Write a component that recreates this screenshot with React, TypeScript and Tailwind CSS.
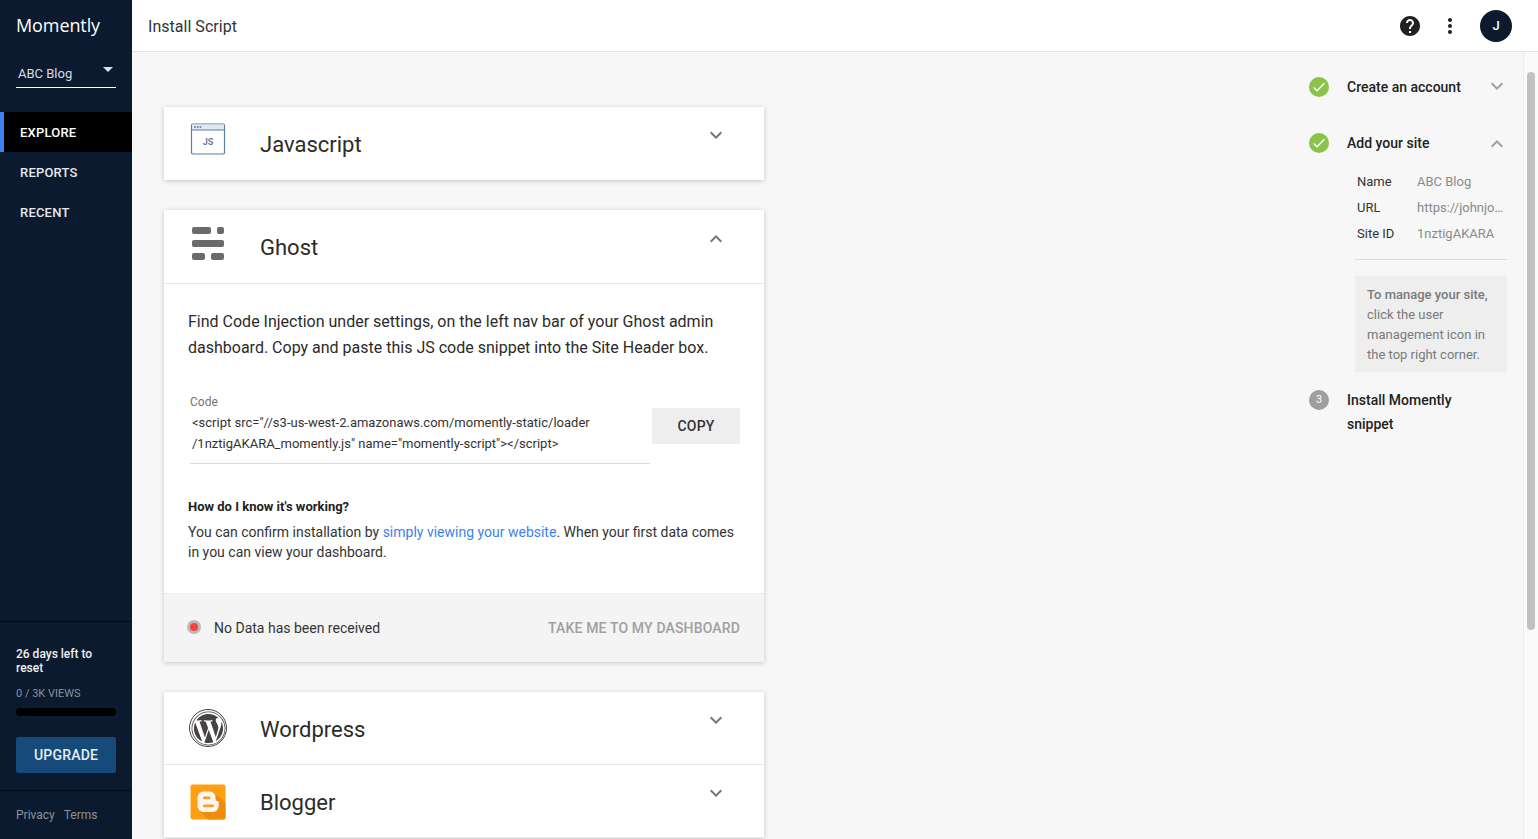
import { MdHelp, MdMoreVert, MdKeyboardArrowDown, MdKeyboardArrowUp, MdCheck } from "react-icons/md";
import { FaWordpress } from "react-icons/fa";

const JsIcon = () => (
  <svg width="36" height="34" viewBox="0 0 36 34" fill="none">
    <rect x="1.5" y="1" width="33" height="30" rx="1.5" fill="#fff" stroke="#5b7f9e" strokeWidth="1.2" />
    <rect x="2.1" y="1.6" width="31.8" height="5.4" fill="#e3e8ee" />
    <line x1="1.5" y1="7" x2="34.5" y2="7" stroke="#5b7f9e" strokeWidth="1" />
    <circle cx="5" cy="4" r="0.9" fill="#5b7f9e" />
    <circle cx="7.7" cy="4" r="0.9" fill="#5b7f9e" />
    <circle cx="10.4" cy="4" r="0.9" fill="#5b7f9e" />
    <text x="18" y="21.5" textAnchor="middle" fontSize="9" fontWeight="700" fill="#5b7f9e" fontFamily="Roboto, sans-serif">
      JS
    </text>
  </svg>
);

const GhostIcon = () => (
  <svg width="34" height="34" viewBox="0 0 34 34" fill="#6b6b6b">
    <rect x="1" y="1" width="19" height="7" rx="2" />
    <rect x="26" y="1" width="7" height="7" rx="2" />
    <rect x="1" y="14" width="32" height="7" rx="2" />
    <rect x="1" y="27" width="13" height="7" rx="2" />
    <rect x="20" y="27" width="13" height="7" rx="2" />
  </svg>
);

const BloggerIcon = () => (
  <svg width="36" height="36" viewBox="0 0 36 36">
    <rect x="0.5" y="0.5" width="35" height="35" rx="2" fill="#ff9f12" />
    <path d="M9 26 L18 35.5 H33.5 a2 2 0 0 0 2 -2 V19 L27 11 Z" fill="#f08c0a" />
    <path
      d="M13.5 7.5 h6 a6 6 0 0 1 6 6 v1.5 a2 2 0 0 0 2 2 a1.2 1.2 0 0 1 1.2 1.2 v3.8 a6 6 0 0 1 -6 6 h-9.2 a6 6 0 0 1 -6 -6 v-8.5 a6 6 0 0 1 6 -6 Z"
      fill="#fbf6ee"
    />
    <rect x="13" y="12.6" width="7.5" height="2.6" rx="1.3" fill="#f0a030" />
    <rect x="13" y="20.6" width="11" height="2.6" rx="1.3" fill="#f0a030" />
  </svg>
);

const Chevron = ({ open }: { open?: boolean }) =>
  open ? (
    <MdKeyboardArrowUp className="size-6 text-[#757575]" />
  ) : (
    <MdKeyboardArrowDown className="size-6 text-[#757575]" />
  );

const CardRow = ({
  icon,
  title,
  open,
  border,
  className,
}: {
  icon: React.ReactNode;
  title: string;
  open?: boolean;
  border?: boolean;
  className: string;
}) => (
  <div className={`flex items-start ${border ? "border-b border-[#e8e8e8]" : ""} ${className}`}>
    <div className="flex w-[96px] shrink-0 justify-center pr-[8px]">{icon}</div>
    <div className="flex-1 text-[22px] leading-[30px] text-[#2b2b2b]">{title}</div>
    <div className="mr-[36px]">
      <Chevron open={open} />
    </div>
  </div>
);

const Sidebar = () => (
  <aside className="flex h-full w-[132px] shrink-0 flex-col bg-[#0b1a2e] text-white">
    <div className="px-4 pt-[12px] font-['Open_Sans',sans-serif] text-[18px] leading-[26px] font-medium tracking-[-0.1px]">
      Momently
    </div>
    <div className="mx-4 mt-[22px] flex h-[28px] items-start justify-between border-b border-white pr-[3px] pl-[2px]">
      <span className="mt-[4px] text-[13px] leading-[20px] text-[#d8dce2]">ABC Blog</span>
      <span className="mt-[7px] h-0 w-0 border-x-[5px] border-t-[5px] border-x-transparent border-t-[#dfe3e8]" />
    </div>
    <nav className="mt-[24px] flex flex-col text-[13px] font-medium tracking-[0.2px]">
      <div className="flex h-10 items-center border-l-4 border-[#3d82f0] bg-black pt-[2px] pl-4">EXPLORE</div>
      <div className="flex h-10 items-center pt-[2px] pl-5 text-[#e6e8ec]">REPORTS</div>
      <div className="flex h-10 items-center pt-[2px] pl-5 text-[#e6e8ec]">RECENT</div>
    </nav>
    <div className="mt-auto border-t border-[#040c17] px-4 pt-[25px]">
      <div className="text-[12px] leading-[14px] font-medium text-[#eef0f3]">26 days left to reset</div>
      <div className="mt-[12px] text-[11px] leading-[14px] text-[#8a929c]">0 / 3K VIEWS</div>
      <div className="mt-[7px] h-2 rounded-full bg-black" />
      <div className="mt-[21px] flex h-9 items-center justify-center rounded-[2px] bg-[#154a7a] text-[14px] font-medium tracking-[0.2px] text-[#e8edf2]">
        UPGRADE
      </div>
    </div>
    <div className="mt-[17px] flex h-[49px] gap-[9px] border-t border-[#040c17] pt-[16px] pl-4 text-[12px] leading-[16px] text-[#8a929c]">
      <span>Privacy</span>
      <span>Terms</span>
    </div>
  </aside>
);

const GhostBody = () => (
  <>
    <div className="px-6 pt-[25px] text-[16px] leading-[26px] text-[#2b2b2b]">
      Find Code Injection under settings, on the left nav bar of your Ghost admin dashboard. Copy and paste this JS code
      snippet into the Site Header box.
    </div>
    <div className="mt-[33px] flex items-start pr-6 pl-[26px]">
      <div className="w-[460px] shrink-0 border-b border-[#dcdcdc] pb-[9px]">
        <div className="text-[12px] leading-[16px] text-[#757575]">Code</div>
        <div className="mt-[2px] pl-[2px] text-[13px] leading-[21px] text-[#333]">
          &lt;script src="//s3-us-west-2.amazonaws.com/momently-static/loader
          <br />
          /1nztigAKARA_momently.js" name="momently-script"&gt;&lt;/script&gt;
        </div>
      </div>
      <div className="mt-[14px] ml-[2px] flex h-9 flex-1 items-center justify-center rounded-[2px] bg-[#eeeeee] text-[14px] font-medium tracking-[0.2px] text-[#333]">
        COPY
      </div>
    </div>
    <div className="mt-[33px] px-6 text-[13px] leading-[20px] font-bold text-[#222]">How do I know it's working?</div>
    <div className="mt-[5px] px-6 text-[14px] leading-[20px] text-[#333]">
      You can confirm installation by <span className="text-[#3d82f0]">simply viewing your website</span>. When your
      first data comes in you can view your dashboard.
    </div>
    <div className="mt-[31px] flex h-[69px] items-center justify-between border-t border-[#ececec] bg-[#f4f4f4] pr-6 pl-[23px]">
      <div className="flex items-center gap-[13px] text-[14px] text-[#333]">
        <span className="mt-[-2px] flex size-[14px] items-center justify-center rounded-full bg-[#b9b9bf]">
          <span className="size-2 rounded-full bg-[#f4433c]" />
        </span>
        No Data has been received
      </div>
      <span className="text-[14px] font-medium tracking-[0.15px] text-[#a0a0a0]">TAKE ME TO MY DASHBOARD</span>
    </div>
  </>
);

const Cards = () => (
  <main className="min-w-0 flex-1 overflow-hidden pt-[55px] pl-8">
    <div className="w-[600px] bg-white shadow-[0_1px_5px_rgba(0,0,0,0.2)]">
      <CardRow icon={<JsIcon />} title="Javascript" className="h-[73px] pt-[16px] [&>div:nth-child(2)]:mt-[7px]" />
    </div>
    <div className="mt-[30px] w-[600px] bg-white shadow-[0_1px_5px_rgba(0,0,0,0.2)]">
      <CardRow
        icon={<GhostIcon />}
        title="Ghost"
        open
        border
        className="h-[74px] pt-[16px] [&>div:nth-child(2)]:mt-[7px] [&>div:nth-child(3)]:mt-[1px]"
      />
      <GhostBody />
    </div>
    <div className="mt-[30px] w-[600px] bg-white shadow-[0_1px_5px_rgba(0,0,0,0.2)]">
      <CardRow
        icon={
          <span className="flex size-[38px] items-center justify-center rounded-full border border-[#444] bg-white">
            <FaWordpress className="size-[35px] text-[#464342]" />
          </span>
        }
        title="Wordpress"
        border
        className="h-[73px] pt-[17px] [&>div:nth-child(2)]:mt-[6px] [&>div:nth-child(3)]:mt-[-1px]"
      />
      <CardRow
        icon={<BloggerIcon />}
        title="Blogger"
        border
        className="h-[73px] pt-[19px] [&>div:nth-child(2)]:mt-[4px] [&>div:nth-child(3)]:mt-[-3px]"
      />
    </div>
  </main>
);

const DoneIcon = () => (
  <span className="flex size-5 shrink-0 items-center justify-center rounded-full bg-[#8bc34a]">
    <MdCheck className="size-4 text-white" />
  </span>
);

const Steps = () => (
  <aside className="w-[214px] shrink-0 pr-4 text-[14px]">
    <div className="mt-[23px] flex h-6 items-center">
      <DoneIcon />
      <span className="ml-[18px] flex-1 font-medium text-[#222]">Create an account</span>
      <span className="mt-[-2px] mr-[-2px]">
        <MdKeyboardArrowDown className="size-6 text-[#9e9e9e]" />
      </span>
    </div>
    <div className="mt-[32px] flex h-6 items-center">
      <DoneIcon />
      <span className="ml-[18px] flex-1 font-medium text-[#222]">Add your site</span>
      <span className="mt-[1px] mr-[-2px]">
        <MdKeyboardArrowUp className="size-6 text-[#9e9e9e]" />
      </span>
    </div>
    <div className="mt-[17px] ml-[46px] grid grid-cols-[62px_1fr] gap-y-[6px] text-[13px] leading-[20px]">
      <span className="ml-[2px] text-[#333]">Name</span>
      <span className="text-[#8a8a8a]">ABC Blog</span>
      <span className="ml-[2px] text-[#333]">URL</span>
      <span className="text-[#8a8a8a]">https://johnjo…</span>
      <span className="ml-[2px] text-[#333]">Site ID</span>
      <span className="text-[#8a8a8a]">1nztigAKARA</span>
    </div>
    <div className="mt-[15px] ml-[46px] border-t border-[#dcdcdc] pt-4">
      <div className="h-[96px] bg-[#eeeeee] px-3 py-[9px] text-[13px] leading-[20px] text-[#7a7a7a]">
        <span className="font-medium">To manage your site,</span> click the user management icon in the top right
        corner.
      </div>
    </div>
    <div className="mt-[18px] flex items-start">
      <span className="flex size-5 shrink-0 items-center justify-center rounded-full bg-[#9e9e9e] text-[11px] text-white">
        3
      </span>
      <span className="mt-[-2px] ml-[18px] leading-[24px] font-medium text-[#222]">
        Install Momently
        <br />
        snippet
      </span>
    </div>
  </aside>
);

export default function App() {
  return (
    <div className="flex h-[839px] w-full overflow-hidden bg-[#f7f7f7] font-['Roboto',sans-serif]">
      <Sidebar />
      <div className="flex min-w-0 flex-1 flex-col">
        <header className="flex h-[52px] shrink-0 items-center border-b border-[#e2e2e2] bg-white pr-[26px] pl-4">
          <h1 className="mt-[2px] flex-1 text-[16px] tracking-[0.03px] text-[#333]">Install Script</h1>
          <MdHelp className="size-6 text-[#212121]" />
          <MdMoreVert className="ml-[16px] size-6 text-[#212121]" />
          <span className="ml-[18px] flex size-8 items-center justify-center rounded-full bg-[#0b1a2e] text-[13px] font-medium text-white">
            J
          </span>
        </header>
        <div className="flex min-h-0 flex-1">
          <Cards />
          <Steps />
          <div className="w-[15px] shrink-0 border-l border-[#ececec] bg-[#fafafa] px-[3px] pt-[20px]">
            <div className="h-[558px] rounded-full bg-[#c1c1c1]" />
          </div>
        </div>
      </div>
    </div>
  );
}
